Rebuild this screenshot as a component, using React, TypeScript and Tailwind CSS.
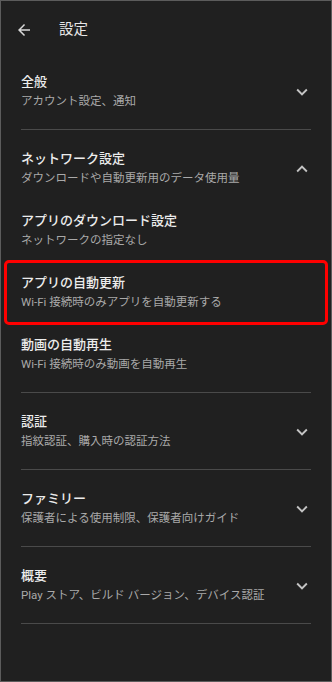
const FONT = "font-['Roboto','Noto_Sans_CJK_JP',sans-serif]";

const ChevronIcon = ({ up = false }: { up?: boolean }) => (
  <svg
    viewBox="0 0 24 24"
    className={`h-[22px] w-[22px] shrink-0 fill-[#c4c4c4] ${up ? "rotate-180" : ""}`}
  >
    <path d="M16.59 8.59 12 13.17 7.41 8.59 6 10l6 6 6-6z" />
  </svg>
);

const ItemText = ({ title, sub }: { title: string; sub: string }) => (
  <div className="flex min-w-0 flex-col gap-[2px]">
    <div className="text-[13px] leading-[18px] font-medium text-[#ececec]">{title}</div>
    <div className="text-[11.5px] leading-[16px] text-[#a9a9a9]">{sub}</div>
  </div>
);

const Section = ({
  title,
  sub,
  up = false,
}: {
  title: string;
  sub: string;
  up?: boolean;
}) => (
  <div className="mx-5 flex items-center justify-between border-b border-[#4a4a4a] pt-5 pb-5">
    <ItemText title={title} sub={sub} />
    <div className="-mr-[2px] pt-[1px]">
      <ChevronIcon up={up} />
    </div>
  </div>
);

const SubItem = ({
  title,
  sub,
  highlight = false,
}: {
  title: string;
  sub: string;
  highlight?: boolean;
}) => (
  <div className="relative px-5 py-[13px]">
    <ItemText title={title} sub={sub} />
    {highlight && (
      <div className="pointer-events-none absolute inset-x-[3px] -top-[1px] -bottom-[2px] rounded-[5px] border-[3px] border-[#ff0000]" />
    )}
  </div>
);

export default function App() {
  return (
    <div
      className={`${FONT} flex h-[682px] w-[332px] flex-col overflow-hidden border border-[#5c5c5c] bg-[#202020]`}
    >
      <div className="flex h-[52px] shrink-0 items-center pt-[6px]">
        <svg viewBox="0 0 24 24" className="ml-[14px] h-[18px] w-[18px] fill-[#d8d8d8]">
          <path d="M20 11H7.83l5.59-5.59L12 4l-8 8 8 8 1.41-1.41L7.83 13H20v-2z" />
        </svg>
        <div className="ml-[26px] text-[14.5px] leading-5 text-[#e6e6e6]">設定</div>
      </div>

      <Section title="全般" sub="アカウント設定、通知" />

      <div className="flex flex-col">
        <div className="mx-5 flex items-center justify-between pt-5 pb-[13px]">
          <ItemText title="ネットワーク設定" sub="ダウンロードや自動更新用のデータ使用量" />
          <div className="-mr-[2px] pt-[1px]">
            <ChevronIcon up />
          </div>
        </div>
        <SubItem title="アプリのダウンロード設定" sub="ネットワークの指定なし" />
        <SubItem
          title="アプリの自動更新"
          sub="Wi-Fi 接続時のみアプリを自動更新する"
          highlight
        />
        <div className="mx-5 border-b border-[#4a4a4a] pt-[13px] pb-5">
          <ItemText title="動画の自動再生" sub="Wi-Fi 接続時のみ動画を自動再生" />
        </div>
      </div>

      <Section title="認証" sub="指紋認証、購入時の認証方法" />
      <Section title="ファミリー" sub="保護者による使用制限、保護者向けガイド" />
      <Section title="概要" sub="Play ストア、ビルド バージョン、デバイス認証" />
    </div>
  );
}
